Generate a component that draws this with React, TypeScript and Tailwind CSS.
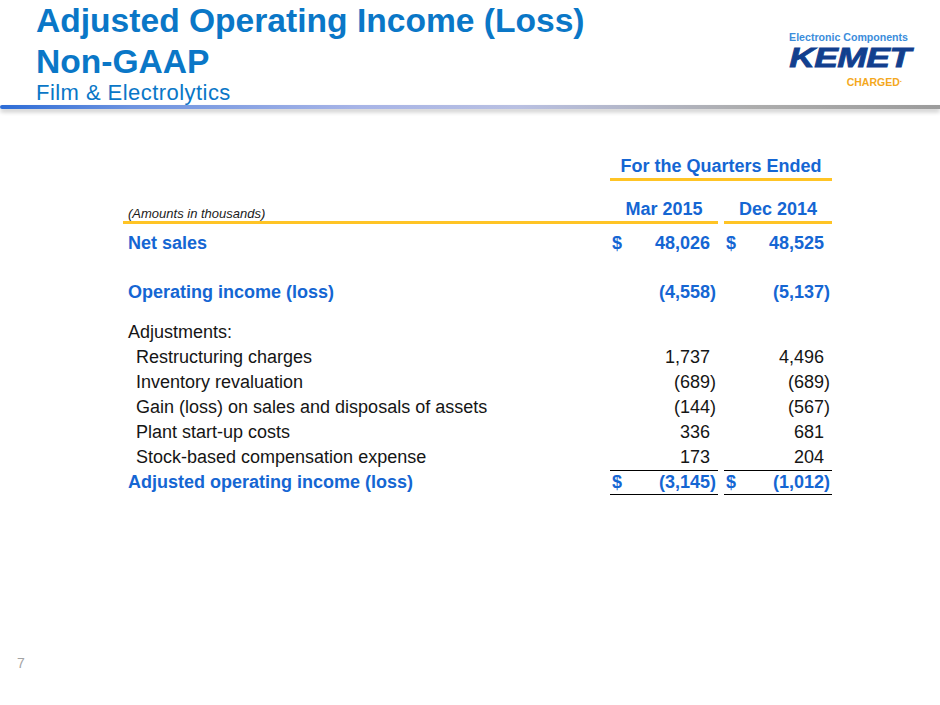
import clsx from "clsx";

type Row = {
  label: string;
  a: string;
  b: string;
  kind: "bold" | "plain" | "item" | "total";
  dollar?: boolean;
  top?: string;
};

const rows: Row[] = [
  { label: "Net sales", a: "48,026", b: "48,525", kind: "bold", dollar: true, top: "mt-[7px]" },
  { label: "Operating income (loss)", a: "(4,558)", b: "(5,137)", kind: "bold", top: "mt-[24px]" },
  { label: "Adjustments:", a: "", b: "", kind: "plain", top: "mt-[15px]" },
  { label: "Restructuring charges", a: "1,737", b: "4,496", kind: "item" },
  { label: "Inventory revaluation", a: "(689)", b: "(689)", kind: "item" },
  { label: "Gain (loss) on sales and disposals of assets", a: "(144)", b: "(567)", kind: "item" },
  { label: "Plant start-up costs", a: "336", b: "681", kind: "item" },
  { label: "Stock-based compensation expense", a: "173", b: "204", kind: "item" },
  { label: "Adjusted operating income (loss)", a: "(3,145)", b: "(1,012)", kind: "total", dollar: true },
];

function Num({ v, dollar, total }: { v: string; dollar?: boolean; total?: boolean }) {
  const neg = v.startsWith("(");
  return (
    <div
      className={clsx(
        "flex h-[25px] w-[108px] justify-between pl-[2px] pr-[2px]",
        total ? "border-y border-black leading-[23px]" : "leading-[25px]"
      )}
    >
      <span>{dollar ? "$" : ""}</span>
      <span className={neg ? "" : "pr-[6px]"}>{v}</span>
    </div>
  );
}

function Logo() {
  return (
    <div className="mr-[30px] mt-[31px] flex flex-col items-end">
      <div className="mr-[2px] h-[12px] text-[10.6px] font-bold leading-[12px] text-[#3b8ddb]">
        Electronic Components
      </div>
      <div className="mt-[3px] h-[24px] text-[28px] font-bold italic leading-[24px] text-[#123f8e]">
        <span className="inline-block origin-right scale-x-[1.27] tracking-[-0.5px] [-webkit-text-stroke:0.8px_#123f8e]">
          KEMET
        </span>
      </div>
      <div className="mr-[8px] mt-[6px] text-[10.5px] font-bold leading-[12px] text-[#f4a81d]">
        CHARGED<span className="relative -top-[4px] text-[8px]">.</span>
      </div>
    </div>
  );
}

export default function App() {
  return (
    <div className="flex h-[705px] w-[940px] flex-col overflow-hidden bg-white font-['Liberation_Sans',Arial,sans-serif] text-[#151515]">
      <header className="flex h-[104px] justify-between">
        <div className="pl-[36px] text-[#0a77c7]">
          <div className="text-[33.6px] font-bold leading-[41px]">Adjusted Operating Income (Loss)</div>
          <div className="text-[33.6px] font-bold leading-[41px]">Non-GAAP</div>
          <div className="text-[22px] leading-[22px] tracking-[0.45px]">Film &amp; Electrolytics</div>
        </div>
        <Logo />
      </header>

      <div className="mt-[1px] h-[4px] rounded-l-full bg-[linear-gradient(to_right,#2d6cd6_0%,#6d93e0_14%,#a7b4e7_38%,#b9c0e2_55%,#adadad_80%,#9c9c9c_100%)] shadow-[0_3px_4px_rgba(0,0,0,0.22)]" />

      <section className="ml-[123px] mt-[46px] w-[709px] text-[18px]">
        <div className="flex">
          <div className="w-[487px]" />
          <div className="h-[26px] w-[222px] border-b-[3px] border-[#ffc425] text-center text-[18px] font-bold leading-[23px] text-[#1566d3]">
            For the Quarters Ended
          </div>
        </div>

        <div className="mt-[17px] flex">
          <div className="flex h-[26px] w-[487px] items-end border-b-[3px] border-[#ffc425] pl-[5px]">
            <span className="text-[13px] italic leading-[15px] text-[#1a1a1a]">(Amounts in thousands)</span>
          </div>
          <div className="h-[26px] w-[108px] border-b-[3px] border-[#ffc425] text-center text-[18px] font-bold leading-[23px] text-[#1566d3]">
            Mar 2015
          </div>
          <div className="w-[6px]" />
          <div className="h-[26px] w-[108px] border-b-[3px] border-[#ffc425] text-center text-[18px] font-bold leading-[23px] text-[#1566d3]">
            Dec 2014
          </div>
        </div>

        {rows.map((r) => {
          const blue = r.kind === "bold" || r.kind === "total";
          return (
            <div
              key={r.label}
              className={clsx("flex", r.top, blue ? "font-bold text-[#1566d3]" : "text-[#151515]")}
            >
              <div
                className={clsx(
                  "h-[25px] w-[487px] leading-[25px]",
                  r.kind === "item" ? "pl-[13px]" : "pl-[5px]"
                )}
              >
                {r.label}
              </div>
              <Num v={r.a} dollar={r.dollar} total={r.kind === "total"} />
              <div className="w-[6px]" />
              <Num v={r.b} dollar={r.dollar} total={r.kind === "total"} />
            </div>
          );
        })}
      </section>

      <div className="mb-[34px] mt-auto pl-[17px] text-[14px] leading-[16px] text-[#a3a3a3]">7</div>
    </div>
  );
}
